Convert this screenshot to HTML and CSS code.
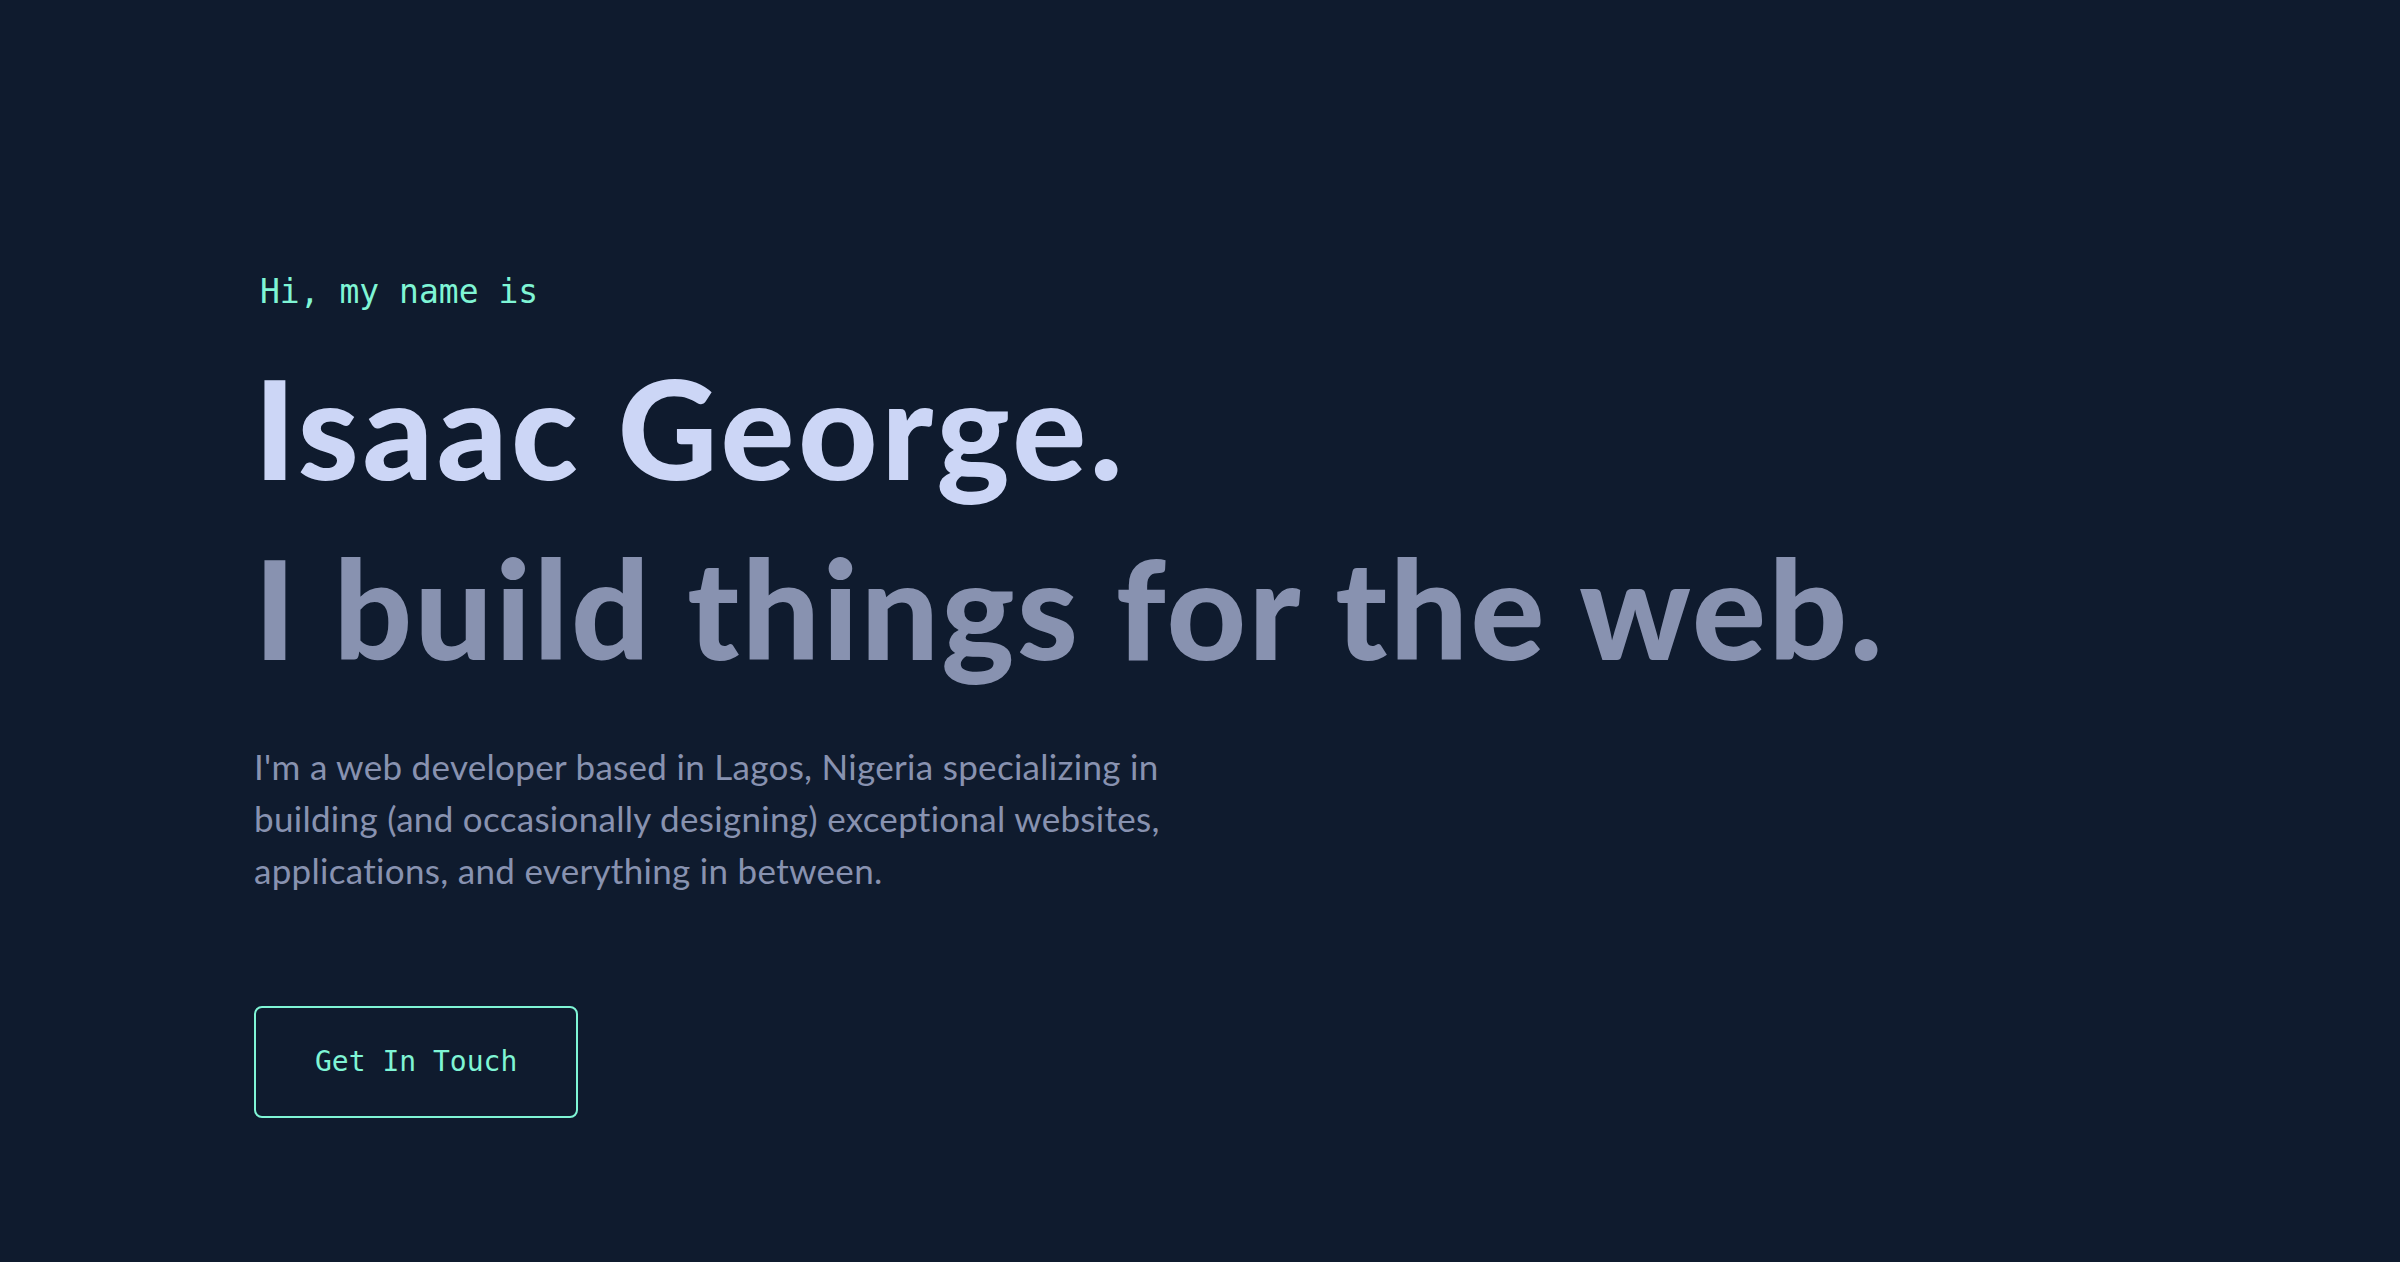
FILE: index.html
```html
<!DOCTYPE html>
<html lang="en">
<head>
<meta charset="utf-8">
<title>Isaac George</title>
<link rel="stylesheet" href="styles.css">
</head>
<body>
<main class="page">
  <section class="hero">
    <h1 class="greeting">Hi, my name is</h1>
    <h2 class="big-heading name">Isaac George.</h2>
    <h3 class="big-heading tagline">I build things for the web.</h3>
    <p class="intro">I'm a web developer based in Lagos, Nigeria specializing in<br>building (and occasionally designing) exceptional websites,<br>applications, and everything in between.</p>
    <a class="cta" href="#contact">Get In Touch</a>
  </section>
</main>
</body>
</html>
```
FILE: styles.css
```css
html, body {
  margin: 0;
  padding: 0;
  background: #0f1b2e;
}

body {
  width: 2400px;
  height: 1262px;
  overflow: hidden;
  font-family: "Lato", "Liberation Sans", sans-serif;
}

.page {
  padding-left: 254px;
}

.hero {
  display: flex;
  flex-direction: column;
  align-items: flex-start;
  padding-top: 275px;
}

.greeting {
  margin: 0 0 29px 6px;
  font-family: "DejaVu Sans Mono", "Liberation Mono", monospace;
  font-weight: 400;
  font-size: 33px;
  line-height: 33px;
  color: #7ff5d5;
}

.big-heading {
  margin: 0;
  font-family: "Lato", "Liberation Sans", sans-serif;
  font-weight: 900;
  font-size: 138px;
  line-height: 180px;
  white-space: nowrap;
}

.name {
  color: #ccd6f6;
  letter-spacing: 3.6px;
}

.tagline {
  color: #8892b0;
  letter-spacing: 2.4px;
}

.intro {
  margin: 43px 0 0 0;
  font-size: 35px;
  line-height: 52px;
  letter-spacing: 0.3px;
  color: #8892b0;
  white-space: nowrap;
}

.cta {
  margin-top: 110px;
  padding: 40px 59px;
  border: 2px solid #7ff5d5;
  border-radius: 8px;
  font-family: "DejaVu Sans Mono", "Liberation Mono", monospace;
  font-size: 28px;
  line-height: 28px;
  color: #7ff5d5;
  text-decoration: none;
}
```
